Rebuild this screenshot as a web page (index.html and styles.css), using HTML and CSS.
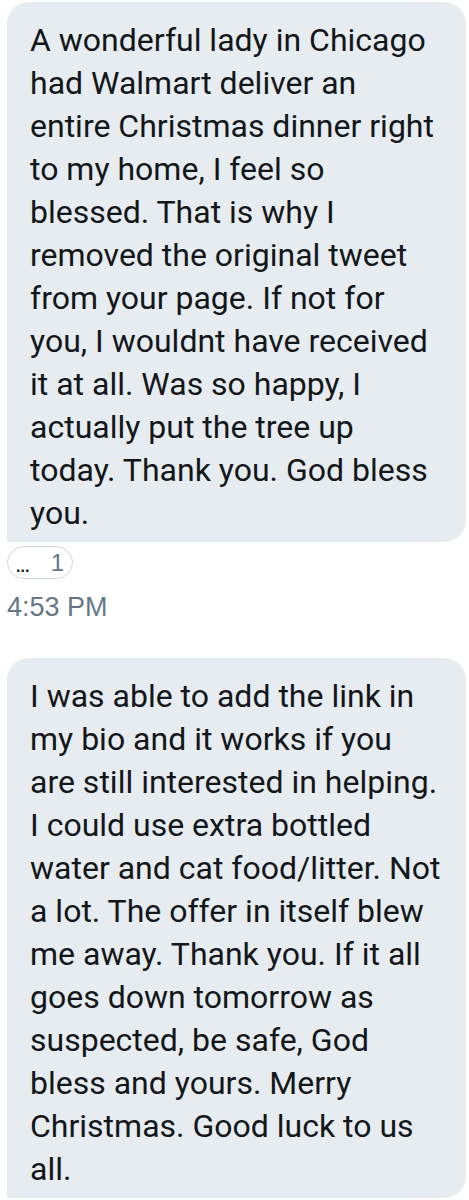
FILE: index.html
```html
<!DOCTYPE html>
<html lang="en">
<head>
    <meta charset="UTF-8">
    <meta name="viewport" content="width=device-width, initial-scale=1.0">
    <title>Messages</title>
    <link rel="stylesheet" href="styles.css">
</head>
<body>
    <div class="thread">
        <div class="message">
            <div class="bubble">A wonderful lady in Chicago had Walmart deliver an entire Christmas dinner right to my home, I feel so blessed. That is why I removed the original tweet from your page. If not for you, I wouldnt have received it at all. Was so happy, I actually put the tree up today. Thank you. God bless you.</div>
            <div class="reaction"><span class="dots">...</span><span class="count">1</span></div>
            <div class="time">4:53 PM</div>
        </div>

        <div class="message">
            <div class="bubble">I was able to add the link in my bio and it works if you are still interested in helping. I could use extra bottled water and cat food/litter. Not a lot. The offer in itself blew me away. Thank you. If it all goes down tomorrow as suspected, be safe, God bless and yours. Merry Christmas. Good luck to us all.</div>
        </div>
    </div>
</body>
</html>
```

FILE: styles.css
```css
body {
    margin: 0;
    background-color: #ffffff;
    font-family: Roboto, "Liberation Sans", sans-serif;
    color: #14171a;
}
.thread {
    padding: 2px 3px 0 7px;
}
.message {
    margin-bottom: 35px;
}
.bubble {
    background-color: #e6ecf0;
    border-radius: 22px 22px 22px 0;
    padding: 17px 24px 7px 23px;
    font-size: 32px;
    line-height: 43px;
}
.reaction {
    display: inline-flex;
    align-items: center;
    justify-content: space-between;
    margin-top: 4px;
    width: 66px;
    height: 33px;
    box-sizing: border-box;
    padding: 0 8px 0 8px;
    border: 1px solid #ccd6dd;
    border-radius: 17px;
    font-family: "Liberation Sans", Roboto, sans-serif;
    color: #657786;
}
.reaction .dots {
    font-size: 16px;
    color: #14171a;
    font-weight: bold;
    margin-top: 8px;
}
.reaction .count {
    font-size: 24px;
}
.time {
    margin-top: 13px;
    font-family: "Liberation Sans", Roboto, sans-serif;
    font-size: 27px;
    color: #657786;
}
```
